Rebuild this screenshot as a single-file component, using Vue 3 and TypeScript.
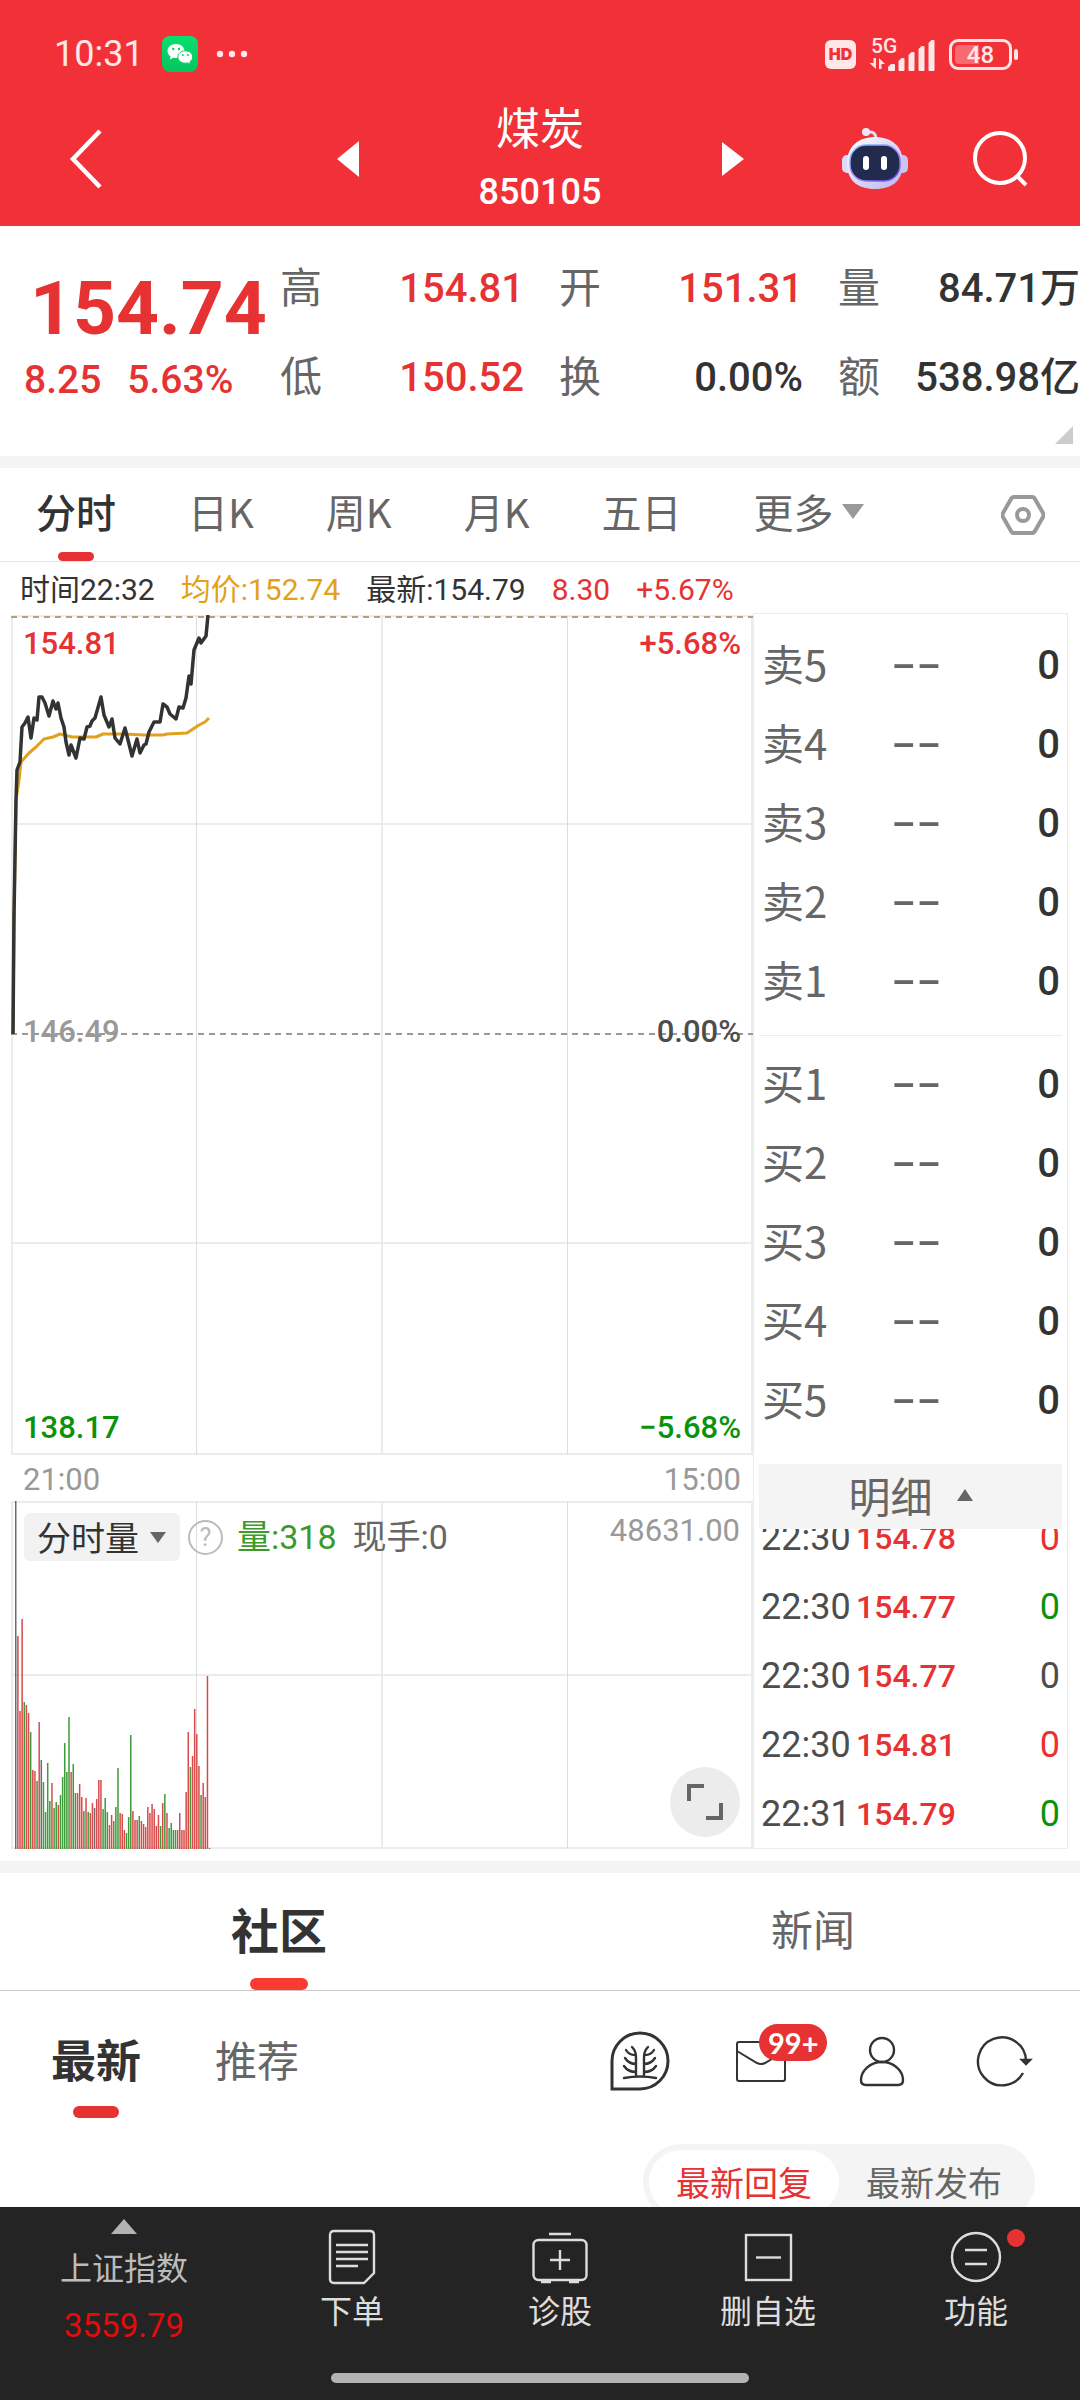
<script setup lang="ts">
interface Quote { label: string; value: string; tone: string }
interface Tick { time: string; price: string; count: string; tone: string }
interface Bar { x: number; h: number; tone: string }

const quotes: Quote[] = [
  { label: '高', value: '154.81', tone: 'up' },
  { label: '开', value: '151.31', tone: 'up' },
  { label: '量', value: '84.71万', tone: 'dark' },
  { label: '低', value: '150.52', tone: 'up' },
  { label: '换', value: '0.00%', tone: 'dark' },
  { label: '额', value: '538.98亿', tone: 'dark' },
]

const periods: string[] = ['分时', '日K', '周K', '月K', '五日']
const sells: string[] = ['卖5', '卖4', '卖3', '卖2', '卖1']
const buys: string[] = ['买1', '买2', '买3', '买4', '买5']

const ticks: Tick[] = [
  { time: '22:30', price: '154.78', count: '0', tone: 'up' },
  { time: '22:30', price: '154.77', count: '0', tone: 'down' },
  { time: '22:30', price: '154.77', count: '0', tone: 'flat' },
  { time: '22:30', price: '154.81', count: '0', tone: 'up' },
  { time: '22:31', price: '154.79', count: '0', tone: 'down' },
]

const priceLine =
  '2,419 3,300 5,185 6,155 9,147 11,112 14,108 17,102 20,123 23,103 26,105 28,82 31,82 34,88 38,101 42,86 45,94 47,88 50,103 53,112 55,127 58,140 60,130 65,143 69,123 73,124 76,112 79,111 81,106 84,103 90,82 93,100 98,112 101,104 104,123 109,129 114,113 117,125 121,141 126,124 129,138 133,130 135,129 138,117 143,107 149,107 152,89 156,92 159,99 165,104 168,92 172,93 175,83 178,61 180,69 183,35 188,23 190,28 195,21 197,0'
const averageLine =
  '2,419 3,300 5,185 8,165 10,147 18,138 25,132 33,124 42,122 49,119 61,122 85,122 92,119 113,119 133,120 152,120 156,119 176,118 182,114 188,110 194,107 198,103'

/* One token per minute: r rising, g falling, k unchanged, then the bar height. */
const volumes =
  'k348 r213 r138 r230 g147 r144 r136 g117 r79 r78 g68 r127 k89 g67 g37 g86 g48 r66 g41 g47 r44 g54 g72 g106 g77 g132 r77 g85 g56 r56 r65 r52 g38 r51 g37 r36 r46 k41 r50 r69 r69 g40 g51 g37 r24 r34 g28 g42 g81 r36 r35 r19 g16 g32 g114 r38 r29 r29 g33 r28 r25 r22 r42 r36 r45 r40 r23 r34 g23 r46 g55 r36 g21 g26 g19 g19 r19 r36 r19 r19 r57 r117 g82 r93 r140 r115 r83 g54 r66 r52 r173 g1'
const bars: Bar[] = volumes.split(' ').map((token, i) => ({
  x: 4 + i * 2.13,
  h: Number(token.slice(1)),
  tone: token[0],
}))
</script>

<template>
  <div class="app">
    <header class="head">
      <div class="status">
        <span class="clock">10:31</span>
        <svg class="wechat" viewBox="0 0 36 36">
          <defs>
            <linearGradient id="wx" x1="0" y1="0" x2="0" y2="1">
              <stop offset="0" stop-color="#07e070" /><stop offset="1" stop-color="#06c45e" />
            </linearGradient>
          </defs>
          <rect width="36" height="36" rx="8" fill="url(#wx)" />
          <path d="M14 8c-4.800 0-8.500 3.200-8.500 7 0 2.200 1.200 4.100 3 5.400L8 23.500l3.200-1.700c.9.200 1.800.3 2.800.3 4.800 0 8.500-3.200 8.500-7.100S18.800 8 14 8z" fill="#fff" />
          <path d="M23.300 14.800c-4.200 0-7.500 2.800-7.500 6.200s3.300 6.200 7.500 6.200c.9 0 1.700-.1 2.400-.3l2.700 1.400-.5-2.500c1.700-1.200 2.800-2.900 2.800-4.800 0-3.400-3.200-6.200-7.400-6.200z" fill="#fff" stroke="#06cf66" stroke-width="1" />
          <g fill="#06cf66"><circle cx="11.200" cy="13" r="1.200" /><circle cx="17" cy="13" r="1.200" /><circle cx="20.800" cy="19" r="1" /><circle cx="25.800" cy="19" r="1" /></g>
        </svg>
        <svg class="dots" viewBox="0 0 32 8"><g fill="#ffe6e7"><circle cx="4" cy="4" r="3.200" /><circle cx="16" cy="4" r="3.200" /><circle cx="28" cy="4" r="3.200" /></g></svg>
        <span class="grow"></span>
        <span class="hd">HD</span>
        <span class="signal">
          <span class="net">5G</span>
          <svg viewBox="0 0 66 36">
            <g fill="#ffe6e7">
              <path d="M4.500 22h2.500v11l-6.500-6h4zM10 33V22l6 6h-3.500v5z" />
              <path d="M19 34v-3l3-3h3q1 0 1 1v5q0 1-1 1h-5q-1 0-1-1zM29.500 34V25l3-3h2q1 0 1 1v11q0 1-1 1h-4q-1 0-1-1zM39.500 34V19l3-3h2q1 0 1 1v17q0 1-1 1h-4q-1 0-1-1zM49.500 34V13l3-3h2q1 0 1 1v23q0 1-1 1h-4q-1 0-1-1zM59.500 34V7l3-3h2q1 0 1 1v29q0 1-1 1h-4q-1 0-1-1z" />
            </g>
          </svg>
        </span>
        <span class="battery"><span>48</span></span>
      </div>
      <div class="bar">
        <button class="icon-btn back" aria-label="返回">
          <svg viewBox="0 0 36 62"><path d="M32 3L5 31l27 28" fill="none" stroke="#fff" stroke-width="4.500" /></svg>
        </button>
        <div class="title">
          <button class="icon-btn" aria-label="上一只"><svg class="arrow" viewBox="0 0 22 36"><path d="M22 0v36L0 18z" fill="#fff" /></svg></button>
          <div class="name"><h1>煤炭</h1><span>850105</span></div>
          <button class="icon-btn" aria-label="下一只"><svg class="arrow" viewBox="0 0 22 36"><path d="M0 1v34l22-17z" fill="#fff" /></svg></button>
        </div>
        <div class="tools">
          <button class="icon-btn" aria-label="智能助手">
            <svg class="robot" viewBox="0 0 66 64">
              <defs>
                <linearGradient id="shell" x1="0" y1="0" x2="1" y2="1"><stop offset="0" stop-color="#fff" /><stop offset="1" stop-color="#b9b4ee" /></linearGradient>
                <linearGradient id="rim" x1="0" y1="0" x2="1" y2="1"><stop offset="0" stop-color="#6fc6ff" /><stop offset=".5" stop-color="#a98cff" /><stop offset="1" stop-color="#6a3df0" /></linearGradient>
              </defs>
              <path d="M24 5h4q6 0 6 7" fill="none" stroke="#dedcf6" stroke-width="3" />
              <circle cx="24" cy="5" r="4" fill="#e9e8fb" />
              <rect x="0" y="28" width="12" height="18" rx="5" fill="#dcdaf8" />
              <rect x="54" y="28" width="12" height="18" rx="5" fill="#c9c5f3" />
              <path d="M33 10c16 0 28 9 28 26S51 62 33 62 5 53 5 36s12-26 28-26z" fill="url(#shell)" />
              <rect x="8" y="18" width="50" height="36" rx="16" fill="#222b4d" stroke="url(#rim)" stroke-width="1.500" />
              <g fill="#fff"><rect x="21" y="29" width="6" height="14" rx="3" /><rect x="39" y="29" width="6" height="14" rx="3" /></g>
            </svg>
          </button>
          <button class="icon-btn" aria-label="搜索">
            <svg class="search" viewBox="0 0 58 58"><circle cx="28" cy="28" r="25" fill="none" stroke="#fff" stroke-width="4" /><path d="M45 46l9 9" stroke="#fff" stroke-width="4" /></svg>
          </button>
        </div>
      </div>
    </header>

    <section class="quote">
      <div class="price">
        <strong>154.74</strong>
        <p><span>8.25</span><span>5.63%</span></p>
      </div>
      <dl class="stats">
        <div v-for="q in quotes" :key="q.label">
          <dt>{{ q.label }}</dt>
          <dd :class="q.tone">{{ q.value }}</dd>
        </div>
      </dl>
      <span class="corner"></span>
    </section>

    <nav class="periods">
      <button v-for="(p, i) in periods" :key="p" :class="{ on: i === 0 }">{{ p }}</button>
      <button class="more">更多<i class="tri-down"></i></button>
      <button class="setting" aria-label="设置">
        <svg viewBox="0 0 44 40"><path d="M13 2h18q2 0 3 2l8 14q1 2 0 4l-8 14q-1 2-3 2H13q-2 0-3-2L2 22q-1-2 0-4l8-14q1-2 3-2z" fill="none" stroke="#999" stroke-width="4" /><circle cx="22" cy="20" r="6" fill="none" stroke="#999" stroke-width="4" /></svg>
      </button>
    </nav>

    <main class="market">
      <div class="left">
        <p class="legend">
          <span class="dark">时间22:32</span><span class="avg">均价:152.74</span><span class="dark">最新:154.79</span><span class="up">8.30</span><span class="up">+5.67%</span>
        </p>
        <div class="stack trend">
          <svg viewBox="0 0 742 840" preserveAspectRatio="none">
            <path d="M1 0V840M371 0V840M741 0V840M0 1H742M0 209H742M0 628H742M0 839H742" fill="none" stroke="#ececec" stroke-width="2" />
            <path d="M185.500 0V840M556.500 0V840" stroke="#ddd" stroke-width="1" />
            <path d="M0 2H742" stroke="#b99f7a" stroke-width="2" stroke-dasharray="6 5" />
            <path d="M0 419H742" stroke="#999" stroke-width="2" stroke-dasharray="6 5" />
            <polyline :points="averageLine" fill="none" stroke="#e2a11b" stroke-width="3" stroke-linejoin="round" />
            <polyline :points="priceLine" fill="none" stroke="#333" stroke-width="3.500" stroke-linejoin="round" />
          </svg>
          <div class="scale">
            <p class="up"><span>154.81</span><span>+5.68%</span></p>
            <p class="base"><span class="mute">146.49</span><span class="flat">0.00%</span></p>
            <p class="down"><span>138.17</span><span>−5.68%</span></p>
          </div>
        </div>
        <p class="hours"><span>21:00</span><span>15:00</span></p>
        <div class="stack volume">
          <svg viewBox="0 0 742 348" preserveAspectRatio="none">
            <path d="M1 0V348M371 0V348M741 0V348M0 1H742M0 174H742M0 347H742" stroke="#ececec" stroke-width="2" fill="none" />
            <path d="M185.500 0V348M556.500 0V348" stroke="#ddd" stroke-width="1" />
            <rect v-for="(b, i) in bars" :key="i" :x="b.x" :y="348 - b.h" width="1.500" :height="b.h" :class="b.tone" />
          </svg>
          <div class="vol-over">
            <div class="vol-head">
              <button class="kind">分时量<i class="tri-down small"></i></button>
              <button class="help" aria-label="说明">?</button>
              <span class="vol">量:318</span>
              <span class="now">现手:0</span>
              <span class="max">48631.00</span>
            </div>
            <button class="expand" aria-label="全屏">
              <svg viewBox="0 0 36 36"><path d="M2 17V2h15M34 19v15H19" fill="none" stroke="#666" stroke-width="4" /></svg>
            </button>
          </div>
        </div>
      </div>

      <aside class="side">
        <table class="book">
          <tbody><tr v-for="s in sells" :key="s"><th scope="row">{{ s }}</th><td class="gap">--</td><td class="qty">0</td></tr></tbody>
        </table>
        <hr />
        <table class="book">
          <tbody><tr v-for="b in buys" :key="b"><th scope="row">{{ b }}</th><td class="gap">--</td><td class="qty">0</td></tr></tbody>
        </table>
        <button class="detail">明细<i class="tri-up"></i></button>
        <div class="ticks">
          <table>
            <tbody>
              <tr v-for="(t, i) in ticks" :key="i"><td class="t">{{ t.time }}</td><td class="p">{{ t.price }}</td><td :class="['c', t.tone]">{{ t.count }}</td></tr>
            </tbody>
          </table>
        </div>
      </aside>
    </main>

    <nav class="tabs">
      <button class="on">社区</button>
      <button>新闻</button>
    </nav>

    <section class="feed">
      <div class="feed-head">
        <button class="on">最新</button>
        <button>推荐</button>
        <div class="acts">
          <button class="icon-btn" aria-label="社区树">
            <svg viewBox="0 0 60 60" fill="none" stroke="#333" stroke-width="3" stroke-linecap="round">
              <path d="M2 58V30a28 28 0 1 1 28 28z" />
              <g stroke-width="2.400"><path d="M14 47q16-3 32 0M26 45V26q0-6-4-10M34 45V26q0-6 4-10M16 19q3 5 9 5M15 27q4 6 11 6M14 35q4 6 12 6M44 19q-3 5-9 5M45 27q-4 6-11 6M46 35q-4 6-12 6" /></g>
            </svg>
          </button>
          <button class="icon-btn mail" aria-label="消息">
            <svg viewBox="0 0 60 60" fill="none" stroke="#333" stroke-width="2"><rect x="6" y="11" width="48" height="39" rx="2" /><path d="M6 20l20 12q4 2 8 0l20-12" /></svg>
            <b>99+</b>
          </button>
          <button class="icon-btn" aria-label="我的">
            <svg viewBox="0 0 60 60" fill="none" stroke="#333" stroke-width="2.400"><circle cx="30" cy="19" r="12" /><path d="M30 31c-12 0-21 9-21 18q0 5 5 5h32q5 0 5-5c0-9-9-18-21-18z" /></svg>
          </button>
          <button class="icon-btn" aria-label="刷新">
            <svg viewBox="0 0 60 60" fill="none" stroke="#333" stroke-width="2.400"><path d="M50 42A24 24 0 1 1 53 30" /><path d="M49 29h8l-4 4z" fill="#333" /></svg>
          </button>
        </div>
      </div>
      <div class="sort"><div class="pill"><button class="on">最新回复</button><button>最新发布</button></div></div>
    </section>

    <footer class="dock">
      <div class="dock-row">
        <button class="index"><i class="tri-up"></i><span>上证指数</span><em>3559.79</em></button>
        <button>
          <svg viewBox="0 0 56 56" fill="none" stroke="#ddd" stroke-width="2.400"><path d="M10 2h36q4 0 4 4v38l-10 10H10q-4 0-4-4V6q0-4 4-4z" /><path d="M12 16h32M12 23h32M12 30h32M12 37h22" /></svg>
          <span>下单</span>
        </button>
        <button>
          <svg viewBox="0 0 56 56" fill="none" stroke="#ddd" stroke-width="2.400"><rect x="1.500" y="11" width="53" height="40" rx="5" /><path d="M17 5h22M28 21v20M18 31h20M9 53h10M37 53h10" /></svg>
          <span>诊股</span>
        </button>
        <button>
          <svg viewBox="0 0 56 56" fill="none" stroke="#ddd" stroke-width="2.400"><rect x="6" y="6" width="45" height="45" /><path d="M16 28.500h25" /></svg>
          <span>删自选</span>
        </button>
        <button class="dotted">
          <svg viewBox="0 0 56 56" fill="none" stroke="#ddd" stroke-width="2.400"><circle cx="28" cy="28" r="24" /><path d="M17 21h22M17 35h22" /></svg>
          <span>功能</span>
        </button>
      </div>
      <div class="home"></div>
    </footer>
  </div>
</template>

<style>
body { background: #fff; }
</style>

<style scoped>
.app {
  --num: Roboto, "Noto Sans CJK SC", sans-serif;
  --cjk: "Noto Sans CJK SC", sans-serif;
  display: flex;
  flex-direction: column;
  min-height: 100vh;
  background: #fff;
  color: #666;
  font-family: var(--cjk);
}
.app * { box-sizing: border-box; }
p, h1, dl, dd { margin: 0; }
svg { display: block; }
button { padding: 0; border: 0; background: none; color: inherit; font: inherit; white-space: nowrap; }
table { width: 100%; border-collapse: collapse; }
td, th { padding: 0; font-weight: 400; text-align: left; }
.up { color: #e63232; }
.down { color: #0a930a; }
.dark { color: #333; }
.flat { color: #4d4d4d; }
.mute { color: #999; }
.avg { color: #e2a11b; }
.grow { flex: 1; }

.head { height: 226px; padding: 32px 0 0; background: #f23038; color: #fff; }
.status { display: flex; align-items: center; height: 44px; padding: 0 68px 0 54px; color: #ffe6e7; }
.clock { font: 36px/44px var(--num); }
.wechat { width: 36px; height: 36px; margin-left: 18px; }
.dots { width: 32px; height: 8px; margin-left: 18px; }
.hd { width: 31px; height: 29px; border-radius: 6px; background: #ffe6e7; color: #f23038; font: 900 16px/29px Inter, sans-serif; text-align: center; }
.signal { position: relative; margin-left: 13px; }
.signal svg { width: 66px; height: 36px; }
.net { position: absolute; left: 2px; top: 0; font: 500 21px/20px Roboto, sans-serif; }
.battery { position: relative; width: 63px; height: 31px; margin-left: 14px; padding: 3px; border: 3px solid #ffe6e7; border-radius: 9px; }
.battery::after { content: ""; position: absolute; right: -9px; top: 7px; width: 4px; height: 11px; border-radius: 2px; background: #ffe6e7; }
.battery span { display: block; height: 19px; border-radius: 4px; background: linear-gradient(90deg, #f86a70 48%, transparent 48%); font: 500 24px/20px Roboto, sans-serif; text-align: center; }
.bar { display: grid; grid-template-columns: 1fr auto 1fr; align-items: center; height: 150px; padding: 16px 50px 0; }
.bar .back { justify-self: start; margin-left: 18px; }
.back svg { width: 36px; height: 62px; }
.title { display: flex; align-items: center; }
.arrow { width: 22px; height: 36px; }
.name { display: flex; flex-direction: column; align-items: center; width: 363px; padding-top: 2px; }
.name h1 { font-size: 44px; line-height: 64px; font-weight: 400; }
.name span { font: 500 36px/68px var(--num); }
.tools { display: flex; align-items: center; justify-content: flex-end; gap: 64px; }
.robot { width: 66px; height: 64px; }
.search { width: 58px; height: 58px; }

.quote { display: flex; position: relative; height: 242px; padding-top: 14px; border-bottom: 12px solid #f4f4f4; }
.price { width: 280px; padding: 20px 0 0 24px; color: #e63232; }
.price strong { display: block; padding-left: 6px; font: 700 75px/96px var(--num); }
.price p { display: flex; gap: 26px; font: 500 39px/48px var(--num); }
.stats { flex: 1; display: grid; grid-template-columns: 279fr 279fr 242fr; grid-auto-rows: 89px; }
.stats div { display: flex; justify-content: space-between; align-items: center; padding-right: 35px; }
.stats div:nth-child(3n) { padding-right: 0; }
.stats dt { font-size: 42px; line-height: 60px; }
.stats dd { padding-top: 8px; font: 500 40px/60px var(--num); white-space: nowrap; }
.corner { position: absolute; right: 7px; bottom: 12px; border: 9px solid transparent; border-right-color: #ccc; border-bottom-color: #ccc; }

.periods { display: flex; gap: 72px; align-items: center; height: 94px; padding: 0 35px 0 36px; border-bottom: 1px solid #e5e5e5; font-size: 40px; }
.periods button { position: relative; height: 93px; padding-bottom: 7px; line-height: 80px; }
.periods .on { color: #333; font-weight: 500; }
.periods .on::after { content: ""; position: absolute; left: 50%; bottom: 0; width: 36px; height: 9px; margin-left: -18px; border-radius: 5px; background: #e63232; }
.periods .more { display: flex; align-items: center; gap: 8px; }
.tri-down { border: 11px solid transparent; border-top: 15px solid #999; border-bottom: 0; }
.tri-down.small { border: 8px solid transparent; border-top: 11px solid #666; border-bottom: 0; }
.tri-up { border: 8px solid transparent; border-bottom: 12px solid #666; border-top: 0; }
.periods .setting { margin-left: auto; padding: 0; }
.setting svg { width: 44px; height: 40px; }

.market { display: flex; padding: 0 12px 12px 11px; border-bottom: 12px solid #f4f4f4; }
.left { flex: 1; min-width: 0; }
.legend { display: flex; gap: 26px; height: 53px; padding-left: 9px; font: 30px/56px var(--num); white-space: nowrap; }
.stack { display: grid; }
.stack > * { grid-area: 1 / 1; min-width: 0; }
.stack > svg { width: 100%; }
.trend > svg { height: 840px; }
.volume > svg { height: 348px; }
.r { fill: #d94a4a; }
.g { fill: #3f9a3a; }
.k { fill: #6b6b70; }
.scale { display: flex; flex-direction: column; justify-content: space-between; padding: 9px 12px 7px 12px; font: 500 31px/40px var(--num); z-index: 1; }
.scale p { display: flex; justify-content: space-between; }
.scale .base { padding-bottom: 8px; }
.hours { display: flex; justify-content: space-between; padding: 2px 12px 0 12px; height: 46px; color: #999; font: 31px/46px var(--num); }
.vol-over { display: flex; flex-direction: column; justify-content: space-between; align-items: flex-end; padding: 12px 13px; z-index: 1; }
.vol-head { display: flex; align-items: center; width: 100%; font: 34px/48px var(--num); }
.kind { display: flex; align-items: center; gap: 11px; height: 48px; padding: 0 14px 0 13px; border-radius: 6px; background: #f2f2f2; color: #333; font: 34px/46px var(--cjk); }
.help { width: 35px; height: 35px; margin: 0 14px 0 8px; border: 2px solid #bbb; border-radius: 50%; color: #bbb; font: 25px/31px Roboto, sans-serif; }
.vol { color: #3a9a2a; }
.now { margin-left: 16px; }
.max { margin-left: auto; color: #999; font-size: 31px; line-height: 36px; align-self: flex-start; }
.expand { display: flex; align-items: center; justify-content: center; width: 70px; height: 70px; border-radius: 50%; background: #ececec; }
.expand svg { width: 36px; height: 36px; }

.side { display: flex; flex-direction: column; width: 315px; margin-top: 51px; padding: 11px 5px 0 5px; border: 1px solid #ececec; }
.side hr { width: 100%; height: 1px; margin: 15px 0 8px; border: 0; background: #ececec; }
.book tr { height: 79px; }
.book th { width: 132px; padding: 0 0 4px 3px; font-size: 42px; line-height: 60px; }
.gap { padding-bottom: 22px; font: 300 76px/50px "Noto Sans CJK SC", sans-serif; }
.book .qty { padding: 2px 2px 0 0; color: #333; font: 500 40px/60px var(--num); text-align: right; }
.detail { display: flex; align-items: center; justify-content: center; gap: 24px; height: 65px; margin-top: 25px; padding: 0 0 4px; background: #f4f4f4; font-size: 42px; line-height: 60px; }
.ticks { display: flex; flex-direction: column; justify-content: flex-end; height: 319px; overflow: hidden; }
.ticks tr { height: 69px; font: 36px/60px var(--num); }
.ticks .t { width: 97px; padding-left: 2px; color: #4d4d4d; }
.ticks .p { color: #e63232; font-size: 32px; font-weight: 500; }
.ticks .c { padding-right: 2px; text-align: right; }

.tabs { display: flex; height: 118px; padding-left: 12px; border-bottom: 1px solid #c8c8c8; }
.tabs button { position: relative; flex: 1; height: 117px; padding-bottom: 7px; font-size: 42px; line-height: 110px; }
.tabs .on { color: #333; font-size: 48px; font-weight: 700; }
.tabs .on::after { content: ""; position: absolute; left: 50%; bottom: 0; width: 58px; height: 12px; margin-left: -29px; border-radius: 6px; background: #fb3a32; }

.feed { flex: 1 1 0px; min-height: 0; overflow: hidden; }
.feed-head { display: flex; align-items: center; height: 153px; padding: 0 47px 0 51px; }
.feed-head > button { position: relative; margin-right: 74px; height: 124px; padding-bottom: 18px; font-size: 42px; line-height: 88px; }
.feed-head > .on { color: #333; font-size: 45px; font-weight: 700; }
.feed-head > .on::after { content: ""; position: absolute; left: 50%; bottom: 12px; width: 46px; height: 12px; margin-left: -23px; border-radius: 6px; background: #e63232; }
.acts { display: flex; gap: 61px; margin: 0 0 14px auto; }
.acts svg { width: 60px; height: 60px; }
.mail { position: relative; }
.mail b { position: absolute; left: 28px; top: -7px; padding: 0 9px; border-radius: 19px; background: #e63232; color: #fff; font: 700 29px/37px Lato, sans-serif; }
.sort { display: flex; justify-content: flex-end; padding-right: 45px; }
.pill { display: flex; padding: 6px; border-radius: 40px; background: #f4f4f4; }
.pill button { height: 64px; padding: 0 27px; border-radius: 32px; font-size: 34px; line-height: 62px; }
.pill .on { background: #fff; color: #e63232; }

.dock { flex: none; height: 193px; background: #242424; color: #ddd; }
.dock-row { display: flex; height: 166px; padding-top: 22px; }
.dock button { position: relative; flex: 208 1 0; display: flex; flex-direction: column; align-items: center; font-size: 32px; line-height: 44px; }
.dock svg { width: 56px; height: 56px; margin-bottom: 2px; }
.dock .index { flex: 248 1 0; color: #bbb; margin-top: -10px; }
.index .tri-up { border: 13px solid transparent; border-bottom: 15px solid #b3b3b3; border-top: 0; margin-bottom: 10px; }
.index em { margin-top: 14px; color: #e60a0a; font: normal 33px/48px var(--num); }
.dotted::after { content: ""; position: absolute; left: 50%; top: 0; width: 18px; height: 18px; margin-left: 31px; border-radius: 50%; background: #e63232; }
.home { width: 418px; height: 10px; margin: 0 auto; border-radius: 5px; background: #b3b3b3; }
</style>
